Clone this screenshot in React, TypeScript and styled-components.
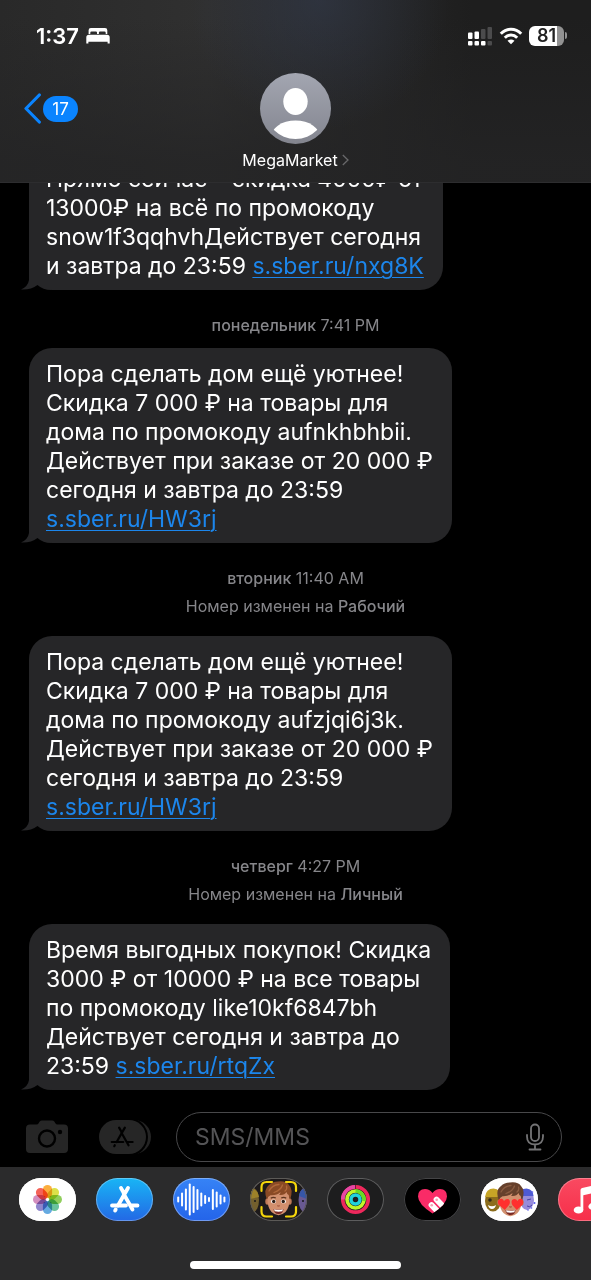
import React from "react";
import styled, { createGlobalStyle } from "styled-components";

const GlobalStyle = createGlobalStyle`
  *, *::before, *::after { box-sizing: border-box; }
  html, body { margin: 0; background: #000; }
  body { font-family: Inter, "Noto Sans", "Liberation Sans", sans-serif; color: #fff; }
  button { border: 0; padding: 0; background: none; color: inherit; font: inherit; cursor: pointer; }
  svg { display: block; flex: none; }
`;

const Screen = styled.div`
  display: flex;
  flex-direction: column;
  height: 100vh;
  overflow: hidden;
  background: #000;
`;

const Header = styled.header`
  flex: none;
  background:
    radial-gradient(circle at 54% 0, rgba(50, 58, 76, 0.6), rgba(50, 58, 76, 0) 130px),
    linear-gradient(to bottom, rgba(36, 36, 37, 0) 10%, rgba(36, 36, 37, 0.8) 90%),
    linear-gradient(to right, #292929, #303030 35%, #1e1e1e 80%);
  border-bottom: 1px solid #2d2d2f;
`;

const StatusBar = styled.div`
  display: flex;
  align-items: center;
  justify-content: space-between;
  height: 71px;
  padding: 0 24px 0 36px;
`;

const StatusGroup = styled.div<{ $gap: number }>`
  display: flex;
  align-items: center;
  gap: ${(p) => p.$gap}px;
`;

const Clock = styled.time`
  font-size: 22px;
  line-height: 28px;
  font-weight: 600;
`;

const Battery = styled.div`
  display: flex;
  align-items: center;
  gap: 1px;
`;

const BatteryBody = styled.div`
  width: 35px;
  height: 20px;
  border-radius: 6px;
  background: linear-gradient(to right, #fff 81%, #929292 81%);
  color: #222;
  font-size: 18px;
  line-height: 20px;
  font-weight: 600;
  text-align: center;
`;

const BatteryCap = styled.div`
  width: 2px;
  height: 7px;
  border-radius: 0 2px 2px 0;
  background: #929292;
`;

const NavBar = styled.nav`
  display: grid;
  grid-template-columns: 1fr auto 1fr;
  align-items: start;
  padding: 2px 24px 12px;
`;

const BackButton = styled.button`
  display: flex;
  align-items: center;
  justify-self: start;
  gap: 2px;
  height: 71px;
`;

const UnreadCount = styled.span`
  min-width: 35px;
  height: 26px;
  border-radius: 13px;
  background: #0a84ff;
  font-size: 17px;
  line-height: 26px;
  text-align: center;
`;

const Contact = styled.button`
  display: flex;
  flex-direction: column;
  align-items: center;
  gap: 6px;
`;

const ContactName = styled.span`
  display: flex;
  align-items: center;
  gap: 4px;
  font-size: 16px;
  line-height: 20px;
`;

const Thread = styled.main`
  flex: 1;
  min-height: 0;
  display: flex;
  flex-direction: column;
  justify-content: flex-end;
  align-items: flex-start;
  overflow: hidden;
  padding: 0 29px;
`;

const Bubble = styled.article`
  position: relative;
  isolation: isolate;
  flex: none;
  max-width: 80%;
  padding: 12px 19px 9px 17px;
  border-radius: 23px;
  background: #262628;
  font-size: 23px;
  line-height: 29px;
  white-space: nowrap;
`;

const BubbleTail = styled.svg`
  position: absolute;
  z-index: -1;
  left: -8px;
  bottom: 0;
`;

const Link = styled.a`
  color: #1c86ec;
  text-decoration: underline;
  text-decoration-thickness: 1px;
  text-underline-offset: 3px;
`;

const Divider = styled.div<{ $withNote: boolean }>`
  flex: none;
  align-self: stretch;
  padding: 21px 0 ${(p) => (p.$withNote ? 16 : 9)}px;
  color: #86868a;
  font-size: 16px;
  line-height: 28px;
  text-align: center;
`;

const DividerLine = styled.div``;

const Strong = styled.span`
  font-weight: 500;
`;

const Composer = styled.form`
  flex: none;
  display: flex;
  align-items: center;
  padding: 22px 29px 5px 25px;
`;

const ToolButton = styled.button<{ $space: number }>`
  margin-right: ${(p) => p.$space}px;
`;

const Field = styled.label`
  flex: 1;
  min-width: 0;
  display: flex;
  align-items: center;
  height: 50px;
  padding: 0 16px 0 18px;
  border: 1px solid #48484a;
  border-radius: 25px;
`;

const MessageInput = styled.input`
  flex: 1;
  min-width: 0;
  border: 0;
  outline: 0;
  padding: 0;
  background: transparent;
  color: #fff;
  font: inherit;
  font-size: 23px;
  line-height: 29px;
  &::placeholder { color: #545456; opacity: 1; }
`;

const AppDrawer = styled.footer`
  flex: none;
  display: flex;
  flex-direction: column;
  align-items: center;
  gap: 40px;
  padding: 11px 0;
  background: #2b2b2c;
`;

const AppRow = styled.div`
  align-self: stretch;
  display: flex;
  gap: 20px;
  padding-left: 19px;
  overflow: hidden;
`;

const AppPill = styled.button<{ $bg: string; $ring: string }>`
  flex: none;
  width: 57px;
  height: 43px;
  border-radius: 22px;
  overflow: hidden;
  background: ${(p) => p.$bg};
  box-shadow: inset 0 0 0 1px ${(p) => p.$ring};
`;

const HomeIndicator = styled.div`
  width: 211px;
  height: 8px;
  border-radius: 4px;
  background: #fff;
`;

function BedIcon() {
  return (
    <svg width="24" height="18" viewBox="0 0 24 18" fill="#fff">
      <path d="M2.600 7V3.200Q2.600 1 4.900 1H19Q21.300 1 21.300 3.200V7H19.700V5.700Q19.700 4.500 18.500 4.500H14Q12.900 4.500 12.900 5.500V7H11V5.500Q11 4.500 9.900 4.500H5.500Q4.300 4.500 4.300 5.700V7Z" />
      <path d="M3 7.700H21Q23.700 7.700 23.700 10.400V16.600H21.600V14.700H2.400V16.600H0.300V10.400Q0.300 7.700 3 7.700Z" />
    </svg>
  );
}

function SignalIcon() {
  return (
    <svg width="25" height="20" viewBox="0 0 25 20">
      <g fill="#fff">
        <rect x="0" y="6.500" width="4.500" height="6.500" rx="1" />
        <rect x="6.500" y="5.500" width="4.500" height="7.500" rx="1" />
        <rect x="0" y="15" width="4.500" height="4.500" rx="1" />
        <rect x="6.500" y="15" width="4.500" height="4.500" rx="1" />
        <rect x="13" y="15" width="4.500" height="4.500" rx="1" />
      </g>
      <g fill="#4b4b4c">
        <rect x="13" y="3" width="4.500" height="10" rx="1" />
        <rect x="19.500" y="1" width="4.500" height="12" rx="1" />
        <rect x="19.500" y="15" width="4.500" height="4.500" rx="1" />
      </g>
    </svg>
  );
}

function WifiIcon() {
  return (
    <svg width="24" height="18" viewBox="0 0 24 18" fill="none" stroke="#fff" strokeWidth="3">
      <path d="M1.800 6.700Q6.200 2.200 12 2.200T22.200 6.700" />
      <path d="M5.800 10.700Q8.500 8 12 8T18.200 10.700" />
      <path d="M12 17.300L8.500 13.800Q12 11 15.500 13.800Z" fill="#fff" stroke="none" />
    </svg>
  );
}

function BackChevron() {
  return (
    <svg width="17" height="31" viewBox="0 0 17 31" fill="none" stroke="#0a84ff" strokeWidth="3.200" strokeLinecap="round" strokeLinejoin="round">
      <path d="M15.300 2L2 15.500L15.300 29" />
    </svg>
  );
}

function AvatarIcon() {
  return (
    <svg width="71" height="71" viewBox="0 0 71 71">
      <defs>
        <linearGradient id="avatar" x1="0" y1="0" x2="0" y2="1">
          <stop offset="0" stopColor="#a3a6b1" />
          <stop offset="1" stopColor="#83858f" />
        </linearGradient>
        <clipPath id="avatarClip"><circle cx="35.500" cy="35.500" r="30.500" /></clipPath>
      </defs>
      <circle cx="35.500" cy="35.500" r="35.500" fill="url(#avatar)" />
      <ellipse cx="35.500" cy="28.500" rx="12.200" ry="13.500" fill="#fff" />
      <ellipse cx="35.500" cy="65" rx="25" ry="17.500" fill="#fff" clipPath="url(#avatarClip)" />
    </svg>
  );
}

function CameraIcon() {
  return (
    <svg width="44" height="34" viewBox="0 0 44 34">
      <path d="M5 4.500H11.500Q13 4.500 13.800 3L14.500 1.800Q15.400.5 17 .5H27Q28.600.5 29.500 1.800L30.200 3Q31 4.500 32.500 4.500H39Q43 4.500 43 8.500V29Q43 33 39 33H5Q1 33 1 29V8.500Q1 4.500 5 4.500Z" fill="#262626" />
      <circle cx="22" cy="18.500" r="8" fill="none" stroke="#000" strokeWidth="2.400" />
      <circle cx="35" cy="12" r="2.200" fill="#000" />
    </svg>
  );
}

function StoreGlyph() {
  return (
    <g fill="none" strokeLinecap="round">
      <path d="M10.500 2L13.200 6.700M17.500 2L7.500 19.500M13.200 8L22 23.500" />
      <path d="M1.500 19.500H15.500M21 19.500H27" />
      <path d="M5.200 23.500L4.600 24.600" />
    </g>
  );
}

function AppsIcon() {
  return (
    <svg width="54" height="34" viewBox="0 0 54 34">
      <rect x="14" width="39" height="34" rx="17" fill="#242424" />
      <rect x="3" y="-2" width="47" height="38" rx="19" fill="#000" />
      <rect x="1" width="47" height="34" rx="17" fill="#262626" />
      <g transform="translate(12.500 6) scale(.82)" stroke="#000" strokeWidth="2.700"><StoreGlyph /></g>
    </svg>
  );
}

function MicIcon() {
  return (
    <svg width="20" height="28" viewBox="0 0 20 28" fill="none" stroke="#747476" strokeWidth="1.800" strokeLinecap="round">
      <rect x="6" y="1.500" width="8" height="16.500" rx="4" />
      <path d="M2 12V13.500Q2 21.500 10 21.500T18 13.500V12M10 21.500V26.500M4.500 26.500H15.500" />
    </svg>
  );
}

const PETALS = ["#fba01c", "#d6dc2a", "#7cc63f", "#4fb98c", "#4a9bdc", "#7d72c4", "#cc7ab4", "#f2463a"];

function PhotosArt() {
  return (
    <svg width="57" height="43" viewBox="0 0 57 43">
      {PETALS.map((color, i) => (
        <rect key={color} x="23.900" y="7" width="9.200" height="13" rx="4.600" fill={color} opacity=".85"
          transform={`rotate(${i * 45} 28.500 21.500)`} style={{ mixBlendMode: "multiply" }} />
      ))}
    </svg>
  );
}

function StoreArt() {
  return (
    <svg width="57" height="43" viewBox="0 0 57 43">
      <g transform="translate(14.500 8)" stroke="#fff" strokeWidth="3.800"><StoreGlyph /></g>
    </svg>
  );
}

const WAVE = [4, 12, 20, 30, 25, 19, 12, 7, 3, 19, 14, 8, 4];

function AudioArt() {
  return (
    <svg width="57" height="43" viewBox="0 0 57 43" stroke="#fff" strokeWidth="2" strokeLinecap="round">
      {WAVE.map((h, i) => (
        <path key={i} d={`M${5.2 + i * 3.85} ${21.5 - h / 2}V${21.5 + h / 2}`} />
      ))}
    </svg>
  );
}

function Face({ hearts }: { hearts?: boolean }) {
  const hair = hearts ? "#66402c" : "#8a4a25";
  const shine = hearts ? "#8a5c42" : "#b0683a";
  return (
    <g>
      <ellipse cx="17.300" cy="23.500" rx="2" ry="3.300" fill="#c07a58" />
      <ellipse cx="39.700" cy="23.500" rx="2" ry="3.300" fill="#c07a58" />
      <path d="M17.500 19Q18 9 28.500 9Q39 9 39.500 19Q40 29 35.500 34Q28.500 40.500 21.500 34Q17 29 17.500 19Z" fill="#d2906e" />
      <path d="M16.800 21.500Q13 11 19 7Q22 3.500 28 3.500Q36 2.500 39 7Q43.500 11 40.200 21.500Q39 20.500 38.700 17Q37 16.500 36.500 14Q34.500 17.500 29 16.800Q30.500 15.500 30.500 14Q27 17.500 20.500 17.200Q18 18 16.800 21.500Z" fill={hair} />
      <path d="M19 13Q22 7 29 6.500M24 14.500Q31 12 32.500 7M35 13Q37.500 11 36.500 8" fill="none" stroke={shine} strokeWidth="1.300" strokeLinecap="round" />
      <path d="M27.300 27.500Q28.500 28.600 29.700 27.500" fill="none" stroke="#a75c42" strokeWidth="1.200" />
      {hearts ? (
        <g fill="#ff302e">
          <path d="M22.800 31L16.500 25.500Q14.800 20.500 18.800 19.800Q21 19.500 22 22Q24 19 26.800 20.300Q29 22.500 27 26Z" />
          <path d="M34.800 31L30.300 26Q28.300 21.500 31.300 20.300Q34 19.500 35.500 22Q36.800 19.300 39.500 20Q42.500 22 40.500 25.700Z" />
        </g>
      ) : (
        <g>
          <ellipse cx="23.500" cy="23.500" rx="2.500" ry="2" fill="#fff" />
          <ellipse cx="33.500" cy="23.500" rx="2.500" ry="2" fill="#fff" />
          <circle cx="23.700" cy="23.500" r="1.700" fill="#2e1f18" />
          <circle cx="33.300" cy="23.500" r="1.700" fill="#2e1f18" />
          <path d="M20.800 20.300Q23 18.800 25.800 20M31.200 20Q34 18.800 36.200 20.300" fill="none" stroke="#5c341e" strokeWidth="1.300" />
        </g>
      )}
      <path d="M23.500 31Q28.500 32 33.500 31Q33 36 28.500 36Q24 36 23.500 31Z" fill="#7a2924" />
      <path d="M24 31.200Q28.500 32.200 33 31.200L32.300 33.300Q28.500 34 24.700 33.300Z" fill="#fff" />
    </g>
  );
}

function MemojiArt() {
  return (
    <svg width="57" height="43" viewBox="0 0 57 43">
      <ellipse cx="3" cy="22" rx="6" ry="12" fill="#735f2d" />
      <path d="M0 10Q8 11 9 19L0 21Z" fill="#9d8129" />
      <ellipse cx="55" cy="22" rx="6.500" ry="12" fill="#695993" />
      <path d="M49 18Q50 10 57 10V21Z" fill="#3656a8" />
      <circle cx="5" cy="23" r="1" fill="#191719" />
      <circle cx="53" cy="23" r="1" fill="#191719" />
      <Face />
      <path d="M11.500 13V9Q11.500 4 16.500 4H22M36 4H41Q46 4 46 9V13M46 29V33.500Q46 38.500 41 38.500H36M22 38.500H16.500Q11.500 38.500 11.500 33.500V29" fill="none" stroke="#f4d50c" strokeWidth="2.200" strokeLinecap="round" />
      <rect x=".5" y=".5" width="56" height="42" rx="21" fill="none" stroke="#5c5a57" />
    </svg>
  );
}

function ActivityArt() {
  return (
    <svg width="57" height="43" viewBox="0 0 57 43" fill="none">
      <circle cx="28.500" cy="21.500" r="12.700" stroke="#ee285c" strokeWidth="3.700" />
      <path d="M28.500 8.800A12.700 12.700 0 0 0 15.800 21.500" stroke="#e747a5" strokeWidth="3.700" />
      <circle cx="28.500" cy="21.500" r="8.500" stroke="#c1f52a" strokeWidth="3.600" />
      <path d="M28.500 13A8.500 8.500 0 0 1 36.800 23" stroke="#69dc25" strokeWidth="3.600" />
      <circle cx="28.500" cy="21.500" r="4.500" stroke="#20d4dc" strokeWidth="3.500" />
      <path d="M28.500 7V11" stroke="#741831" strokeWidth="1" />
    </svg>
  );
}

function HeartArt() {
  return (
    <svg width="57" height="43" viewBox="0 0 57 43">
      <defs>
        <clipPath id="heart"><path d="M28.500 35.500Q14 26 14 18.500Q14 11 21 11Q25.500 11 28.500 15Q31.500 11 36 11Q43 11 43 18.500Q43 26 28.500 35.500Z" /></clipPath>
      </defs>
      <g clipPath="url(#heart)">
        <rect x="12" y="9" width="33" height="29" fill="#fa2b67" />
        <path d="M27.500 27L36 36M32.500 21.500L42 31.500" stroke="#fff" strokeWidth="5.800" strokeLinecap="round" />
        <circle cx="27.700" cy="27.200" r="1.300" fill="#f6a0b6" />
        <circle cx="32.700" cy="21.700" r="1.300" fill="#f6a0b6" />
      </g>
    </svg>
  );
}

function StickersArt() {
  return (
    <svg width="57" height="43" viewBox="0 0 57 43">
      <ellipse cx="12" cy="23" rx="8" ry="10.500" fill="#8c6d1c" />
      <path d="M4 19Q5 10.500 12.500 10.500Q20 11 20 19Z" fill="#c7a526" />
      <circle cx="9" cy="22" r="1.800" fill="#332b18" />
      <path d="M7 27Q11 29.500 15 27Q14 31 11 31Q8 31 7 27Z" fill="#fff" />
      <ellipse cx="46" cy="22" rx="7" ry="10" fill="#978cdb" />
      <path d="M38 18Q38 10.500 45.500 10.500Q52 11 52.500 18Z" fill="#4e5ad4" />
      <path d="M46 22L50 21M46 28Q49 30 51 27" stroke="#473fa5" fill="none" />
      <g fill="#575bea"><circle cx="51.500" cy="14" r=".8" /><circle cx="53.500" cy="25" r="1" /><circle cx="50.500" cy="30" r=".8" /><circle cx="47" cy="32" r=".8" /></g>
      <g transform="translate(1 1)"><Face hearts /></g>
    </svg>
  );
}

function MusicArt() {
  return (
    <svg width="57" height="43" viewBox="0 0 57 43" fill="#fff">
      <path d="M22.500 12Q22.500 10.300 24.200 9.900L38 7Q40 6.600 40 8.600V28H37.200V14.600L25.300 17.200V32H22.500Z" />
      <ellipse cx="20.500" cy="32" rx="4.800" ry="3.600" />
      <ellipse cx="35.200" cy="28.500" rx="4.800" ry="3.600" />
    </svg>
  );
}

const APPS = [
  { name: "Photos", bg: "#fff", ring: "#fff", Art: PhotosArt },
  { name: "App Store", bg: "linear-gradient(#18b5f5, #2368e5)", ring: "rgba(255,255,255,.3)", Art: StoreArt },
  { name: "Audio", bg: "linear-gradient(#3683f6, #2464e9)", ring: "rgba(255,255,255,.35)", Art: AudioArt },
  { name: "Memoji", bg: "#1d1a1b", ring: "#5c5a57", Art: MemojiArt },
  { name: "Activity", bg: "#1d1d1e", ring: "#5d5d5e", Art: ActivityArt },
  { name: "Digital Touch", bg: "#000", ring: "#444446", Art: HeartArt },
  { name: "Stickers", bg: "#fff", ring: "#fff", Art: StickersArt },
  { name: "Music", bg: "linear-gradient(#f94a61, #f72e49)", ring: "rgba(255,255,255,.3)", Art: MusicArt },
];

function Message({ lines, link }: { lines: string[]; link: string }) {
  return (
    <Bubble>
      {lines.map((line, i) => (
        <React.Fragment key={i}>
          {i > 0 && <br />}
          {line}
        </React.Fragment>
      ))}
      <Link href={`https://${link}`}>{link}</Link>
      <BubbleTail width="30" height="24" viewBox="0 0 30 24" aria-hidden="true">
        <path d="M14 24H30V19H14Z" fill="#000" />
        <path d="M8 0V14Q7 20.500 0 23.500Q10 24 16.500 19Q22 24 30 24V0Z" fill="#262628" />
      </BubbleTail>
    </Bubble>
  );
}

function DateDivider({ day, time, line }: { day: string; time: string; line?: string }) {
  return (
    <Divider $withNote={Boolean(line)}>
      <DividerLine><Strong>{day}</Strong> {time}</DividerLine>
      {line && <DividerLine>Номер изменен на <Strong>{line}</Strong></DividerLine>}
    </Divider>
  );
}

export default function App() {
  return (
    <Screen>
      <GlobalStyle />
      <Header>
        <StatusBar>
          <StatusGroup $gap={7}>
            <Clock>1:37</Clock>
            <BedIcon />
          </StatusGroup>
          <StatusGroup $gap={6}>
            <SignalIcon />
            <WifiIcon />
            <Battery>
              <BatteryBody>81</BatteryBody>
              <BatteryCap />
            </Battery>
          </StatusGroup>
        </StatusBar>
        <NavBar>
          <BackButton type="button" aria-label="Back, 17 unread">
            <BackChevron />
            <UnreadCount>17</UnreadCount>
          </BackButton>
          <Contact type="button">
            <AvatarIcon />
            <ContactName>
              MegaMarket
              <svg width="7" height="12" viewBox="0 0 7 12" fill="none" stroke="#69696b" strokeWidth="1.300">
                <path d="M.8 1L6 6L.8 11" />
              </svg>
            </ContactName>
          </Contact>
        </NavBar>
      </Header>

      <Thread>
        <Message lines={["Прямо сейчас – скидка 4000₽ от", "13000₽ на всё по промокоду", "snow1f3qqhvhДействует сегодня", "и завтра до 23:59 "]} link="s.sber.ru/nxg8K" />
        <DateDivider day="понедельник" time="7:41 PM" />
        <Message lines={["Пора сделать дом ещё уютнее!", "Скидка 7 000 ₽ на товары для", "дома по промокоду aufnkhbhbii.", "Действует при заказе от 20 000 ₽", "сегодня и завтра до 23:59", ""]} link="s.sber.ru/HW3rj" />
        <DateDivider day="вторник" time="11:40 AM" line="Рабочий" />
        <Message lines={["Пора сделать дом ещё уютнее!", "Скидка 7 000 ₽ на товары для", "дома по промокоду aufzjqi6j3k.", "Действует при заказе от 20 000 ₽", "сегодня и завтра до 23:59", ""]} link="s.sber.ru/HW3rj" />
        <DateDivider day="четверг" time="4:27 PM" line="Личный" />
        <Message lines={["Время выгодных покупок! Скидка", "3000 ₽ от 10000 ₽ на все товары", "по промокоду like10kf6847bh", "Действует сегодня и завтра до", "23:59 "]} link="s.sber.ru/rtqZx" />
      </Thread>

      <Composer onSubmit={(e) => e.preventDefault()}>
        <ToolButton type="button" aria-label="Camera" $space={29}><CameraIcon /></ToolButton>
        <ToolButton type="button" aria-label="Apps" $space={24}><AppsIcon /></ToolButton>
        <Field>
          <MessageInput type="text" placeholder="SMS/MMS" aria-label="SMS/MMS" />
          <MicIcon />
        </Field>
      </Composer>

      <AppDrawer>
        <AppRow>
          {APPS.map(({ name, bg, ring, Art }) => (
            <AppPill key={name} type="button" aria-label={name} $bg={bg} $ring={ring}>
              <Art />
            </AppPill>
          ))}
        </AppRow>
        <HomeIndicator />
      </AppDrawer>
    </Screen>
  );
}
